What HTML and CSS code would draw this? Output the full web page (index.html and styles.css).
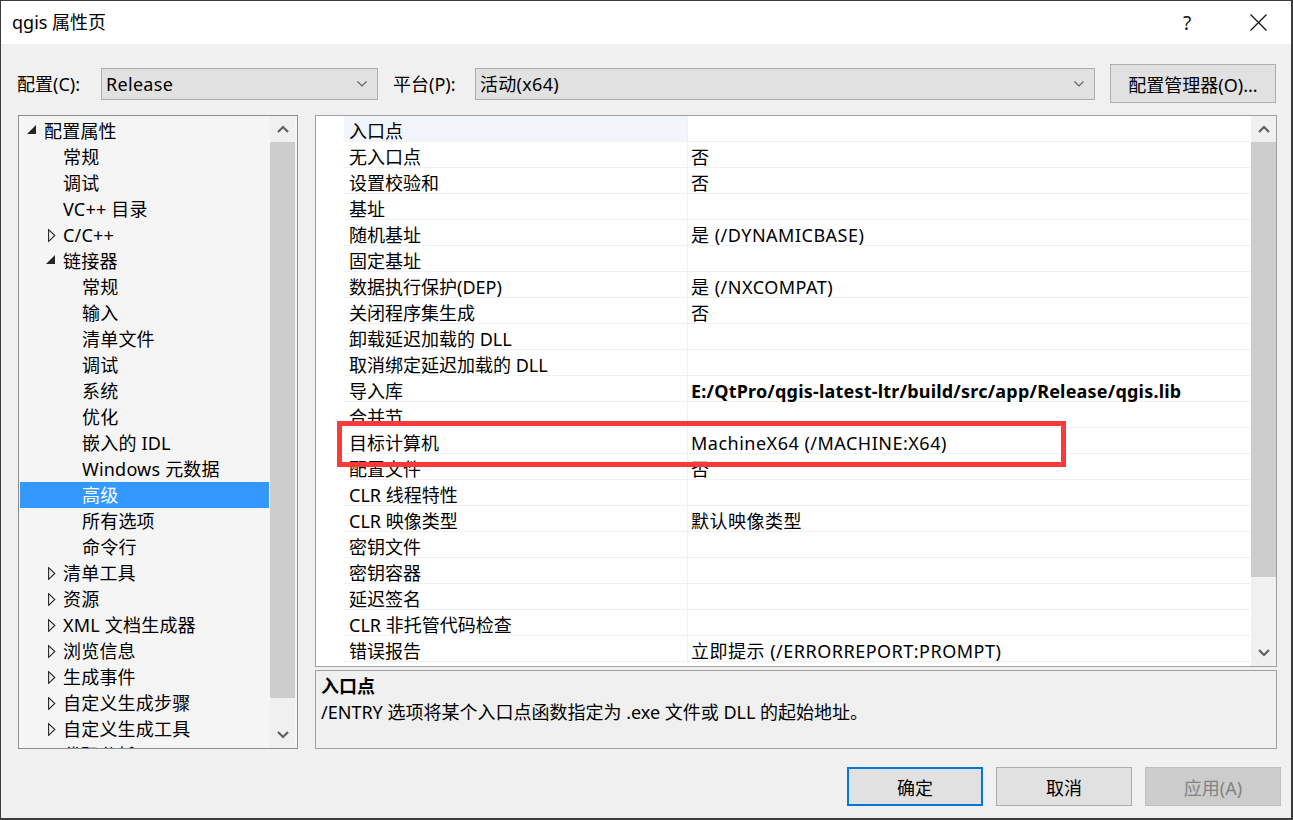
FILE: index.html
```html
<!DOCTYPE html>
<html lang="zh-CN">
<head>
<meta charset="utf-8">
<title>qgis 属性页</title>
<link rel="stylesheet" href="styles.css">
</head>
<body>
<div class="window">
  <div class="titlebar">
    <div class="title">qgis 属性页</div>
    <div class="tb-btn help">?</div>
    <div class="tb-btn close">
      <svg width="17" height="17" viewBox="0 0 17 17"><path d="M0.5 0.5 L16.5 16.5 M16.5 0.5 L0.5 16.5" stroke="#111" stroke-width="1.2" fill="none"/></svg>
    </div>
  </div>

  <div class="configbar">
    <div class="cfg-label l1">配置(C):</div>
    <div class="combo c1">
      <span class="combo-text">Release</span>
      <svg class="combo-chev" width="10" height="6" viewBox="0 0 10 6"><path d="M0.5 0.5 L5 5 L9.5 0.5" stroke="#5f5f5f" stroke-width="1.1" fill="none"/></svg>
    </div>
    <div class="cfg-label l2">平台(P):</div>
    <div class="combo c2">
      <span class="combo-text">活动(x64)</span>
      <svg class="combo-chev" width="10" height="6" viewBox="0 0 10 6"><path d="M0.5 0.5 L5 5 L9.5 0.5" stroke="#5f5f5f" stroke-width="1.1" fill="none"/></svg>
    </div>
    <div class="btn mgr">配置管理器(O)...</div>
  </div>

  <div class="main">
    <div class="tree">
      <div class="tree-list">
        <div class="trow lv0"><span class="tw"><svg class="exp" width="9" height="9" viewBox="0 0 9 9"><polygon points="9,0 9,9 0,9" fill="#262626"/></svg></span><span>配置属性</span></div>
        <div class="trow lv1"><span class="tw"></span><span>常规</span></div>
        <div class="trow lv1"><span class="tw"></span><span>调试</span></div>
        <div class="trow lv1"><span class="tw"></span><span>VC++ 目录</span></div>
        <div class="trow lv1"><span class="tw"><svg class="col" width="8" height="13" viewBox="0 0 8 13"><polygon points="0.6,0.6 6.8,6.5 0.6,12.4" fill="none" stroke="#262626" stroke-width="1.1"/></svg></span><span>C/C++</span></div>
        <div class="trow lv1"><span class="tw"><svg class="exp" width="9" height="9" viewBox="0 0 9 9"><polygon points="9,0 9,9 0,9" fill="#262626"/></svg></span><span>链接器</span></div>
        <div class="trow lv2"><span class="tw"></span><span>常规</span></div>
        <div class="trow lv2"><span class="tw"></span><span>输入</span></div>
        <div class="trow lv2"><span class="tw"></span><span>清单文件</span></div>
        <div class="trow lv2"><span class="tw"></span><span>调试</span></div>
        <div class="trow lv2"><span class="tw"></span><span>系统</span></div>
        <div class="trow lv2"><span class="tw"></span><span>优化</span></div>
        <div class="trow lv2"><span class="tw"></span><span>嵌入的 IDL</span></div>
        <div class="trow lv2"><span class="tw"></span><span>Windows 元数据</span></div>
        <div class="trow lv2 selected"><span class="tw"></span><span>高级</span></div>
        <div class="trow lv2"><span class="tw"></span><span>所有选项</span></div>
        <div class="trow lv2"><span class="tw"></span><span>命令行</span></div>
        <div class="trow lv1"><span class="tw"><svg class="col" width="8" height="13" viewBox="0 0 8 13"><polygon points="0.6,0.6 6.8,6.5 0.6,12.4" fill="none" stroke="#262626" stroke-width="1.1"/></svg></span><span>清单工具</span></div>
        <div class="trow lv1"><span class="tw"><svg class="col" width="8" height="13" viewBox="0 0 8 13"><polygon points="0.6,0.6 6.8,6.5 0.6,12.4" fill="none" stroke="#262626" stroke-width="1.1"/></svg></span><span>资源</span></div>
        <div class="trow lv1"><span class="tw"><svg class="col" width="8" height="13" viewBox="0 0 8 13"><polygon points="0.6,0.6 6.8,6.5 0.6,12.4" fill="none" stroke="#262626" stroke-width="1.1"/></svg></span><span>XML 文档生成器</span></div>
        <div class="trow lv1"><span class="tw"><svg class="col" width="8" height="13" viewBox="0 0 8 13"><polygon points="0.6,0.6 6.8,6.5 0.6,12.4" fill="none" stroke="#262626" stroke-width="1.1"/></svg></span><span>浏览信息</span></div>
        <div class="trow lv1"><span class="tw"><svg class="col" width="8" height="13" viewBox="0 0 8 13"><polygon points="0.6,0.6 6.8,6.5 0.6,12.4" fill="none" stroke="#262626" stroke-width="1.1"/></svg></span><span>生成事件</span></div>
        <div class="trow lv1"><span class="tw"><svg class="col" width="8" height="13" viewBox="0 0 8 13"><polygon points="0.6,0.6 6.8,6.5 0.6,12.4" fill="none" stroke="#262626" stroke-width="1.1"/></svg></span><span>自定义生成步骤</span></div>
        <div class="trow lv1"><span class="tw"><svg class="col" width="8" height="13" viewBox="0 0 8 13"><polygon points="0.6,0.6 6.8,6.5 0.6,12.4" fill="none" stroke="#262626" stroke-width="1.1"/></svg></span><span>自定义生成工具</span></div>
        <div class="trow lv1"><span class="tw"><svg class="col" width="8" height="13" viewBox="0 0 8 13"><polygon points="0.6,0.6 6.8,6.5 0.6,12.4" fill="none" stroke="#262626" stroke-width="1.1"/></svg></span><span>代码分析</span></div>
      </div>
      <div class="vscroll tree-scroll">
        <div class="sarrow"><svg width="12" height="8" viewBox="0 0 12 8"><path d="M1 7 L6 2 L11 7" stroke="#606060" stroke-width="2.2" fill="none"/></svg></div>
        <div class="thumb"></div>
        <div class="track"></div>
        <div class="sarrow"><svg width="12" height="8" viewBox="0 0 12 8"><path d="M1 1 L6 6 L11 1" stroke="#606060" stroke-width="2.2" fill="none"/></svg></div>
      </div>
    </div>

    <div class="rightcol">
      <div class="grid">
        <div class="grid-margin"></div>
        <div class="grid-rows">
          <div class="grow current"><div class="gname">入口点</div><div class="gval"></div></div>
          <div class="grow"><div class="gname">无入口点</div><div class="gval">否</div></div>
          <div class="grow"><div class="gname">设置校验和</div><div class="gval">否</div></div>
          <div class="grow"><div class="gname">基址</div><div class="gval"></div></div>
          <div class="grow"><div class="gname">随机基址</div><div class="gval">是 (/DYNAMICBASE)</div></div>
          <div class="grow"><div class="gname">固定基址</div><div class="gval"></div></div>
          <div class="grow"><div class="gname">数据执行保护(DEP)</div><div class="gval">是 (/NXCOMPAT)</div></div>
          <div class="grow"><div class="gname">关闭程序集生成</div><div class="gval">否</div></div>
          <div class="grow"><div class="gname">卸载延迟加载的 DLL</div><div class="gval"></div></div>
          <div class="grow"><div class="gname">取消绑定延迟加载的 DLL</div><div class="gval"></div></div>
          <div class="grow"><div class="gname">导入库</div><div class="gval bold">E:/QtPro/qgis-latest-ltr/build/src/app/Release/qgis.lib</div></div>
          <div class="grow"><div class="gname">合并节</div><div class="gval"></div></div>
          <div class="grow"><div class="gname">目标计算机</div><div class="gval">MachineX64 (/MACHINE:X64)</div></div>
          <div class="grow"><div class="gname">配置文件</div><div class="gval">否</div></div>
          <div class="grow"><div class="gname">CLR 线程特性</div><div class="gval"></div></div>
          <div class="grow"><div class="gname">CLR 映像类型</div><div class="gval">默认映像类型</div></div>
          <div class="grow"><div class="gname">密钥文件</div><div class="gval"></div></div>
          <div class="grow"><div class="gname">密钥容器</div><div class="gval"></div></div>
          <div class="grow"><div class="gname">延迟签名</div><div class="gval"></div></div>
          <div class="grow"><div class="gname">CLR 非托管代码检查</div><div class="gval"></div></div>
          <div class="grow"><div class="gname">错误报告</div><div class="gval">立即提示 (/ERRORREPORT:PROMPT)</div></div>
        </div>
        <div class="vscroll grid-scroll">
          <div class="sarrow"><svg width="12" height="8" viewBox="0 0 12 8"><path d="M1 7 L6 2 L11 7" stroke="#606060" stroke-width="2.2" fill="none"/></svg></div>
          <div class="thumb"></div>
          <div class="track"></div>
          <div class="sarrow"><svg width="12" height="8" viewBox="0 0 12 8"><path d="M1 1 L6 6 L11 1" stroke="#606060" stroke-width="2.2" fill="none"/></svg></div>
        </div>
        <div class="highlight"></div>
      </div>
      <div class="desc">
        <div class="desc-title">入口点</div>
        <div class="desc-text">/ENTRY 选项将某个入口点函数指定为 .exe 文件或 DLL 的起始地址。</div>
      </div>
    </div>
  </div>

  <div class="footer">
    <div class="btn fbtn default">确定</div>
    <div class="btn fbtn">取消</div>
    <div class="btn fbtn disabled">应用(A)</div>
  </div>
</div>
</body>
</html>
```

FILE: styles.css
```css
* { box-sizing: border-box; }

html, body {
  margin: 0;
  padding: 0;
}

body {
  width: 1293px;
  height: 820px;
  overflow: hidden;
  font-family: "Noto Sans", "Noto Sans CJK SC", sans-serif;
  font-size: 18px;
  color: #000;
  background: #2b2b2b;
}

.window {
  width: 1293px;
  height: 820px;
  border-top: 1px solid #3c3c3c;
  border-left: 1px solid #3c3c3c;
  border-right: 2px solid #3c3c3c;
  border-bottom: 2px solid #3c3c3c;
  background: #f0f0f0;
  display: flex;
  flex-direction: column;
}

/* Title bar */
.titlebar {
  height: 43px;
  flex: none;
  background: #fff;
  display: flex;
  align-items: center;
  padding-left: 11px;
  padding-right: 18px;
}

.title {
  flex: 1;
  font-size: 18px;
  line-height: 43px;
}

.tb-btn {
  width: 30px;
  height: 43px;
  display: flex;
  align-items: center;
  justify-content: center;
}

.help {
  font-size: 19px;
  margin-right: 41px;
  color: #111;
}

/* Config bar */
.configbar {
  height: 71px;
  flex: none;
  display: flex;
  align-items: flex-start;
  padding-top: 20px;
  padding-left: 16px;
}

.cfg-label {
  margin-top: 4px;
  line-height: 32px;
  flex: none;
  white-space: nowrap;
}

.l1 { width: 84px; }
.l2 { width: 82px; margin-left: 15px; }

.combo {
  margin-top: 4px;
  height: 32px;
  background: #e1e1e1;
  border: 1px solid #adadad;
  display: flex;
  align-items: center;
  padding-left: 4px;
  padding-right: 10px;
  flex: none;
}

.c1 { width: 277px; }
.c2 { width: 620px; }

.combo-text {
  flex: 1;
  line-height: 30px;
  letter-spacing: 0.3px;
}

.combo-chev { flex: none; }

.btn {
  background: #e1e1e1;
  border: 1px solid #adadad;
  display: flex;
  align-items: center;
  justify-content: center;
  white-space: nowrap;
}

.mgr {
  width: 166px;
  height: 39px;
  margin-left: 15px;
  flex: none;
}

/* Main area */
.main {
  height: 634px;
  flex: none;
  display: flex;
  padding-left: 17px;
  gap: 17px;
}

.tree {
  width: 280px;
  height: 634px;
  border: 1px solid #8f8f8f;
  background: #f5f5f5;
  display: flex;
  flex: none;
}

.tree-list {
  width: 251px;
  overflow: hidden;
  padding-top: 2px;
  flex: none;
}

.trow {
  height: 26px;
  margin: 0 1px;
  display: flex;
  align-items: center;
  white-space: nowrap;
  line-height: 26px;
  letter-spacing: 0.2px;
}

.trow.lv0 { padding-left: 7px; }
.trow.lv1 { padding-left: 26px; }
.trow.lv2 { padding-left: 45px; }

.trow.selected {
  background: #3399ff;
  color: #fff;
}

.tw {
  width: 17px;
  height: 26px;
  flex: none;
  display: flex;
  align-items: center;
}

.tw .exp { margin-top: -3px; }
.tw .col { margin-left: 2px; }

.vscroll {
  width: 25px;
  flex: none;
  display: flex;
  flex-direction: column;
  background: #f0f0f0;
}

.tree-scroll { margin-right: 2px; }

.sarrow {
  height: 26px;
  flex: none;
  display: flex;
  align-items: center;
  justify-content: center;
}

.thumb {
  background: #cdcdcd;
  flex: none;
}

.track { flex: 1; }

.tree-scroll .thumb { height: 556px; }
.grid-scroll .thumb { height: 435px; }

.rightcol {
  width: 962px;
  flex: none;
  display: flex;
  flex-direction: column;
  gap: 3px;
}

.grid {
  position: relative;
  height: 552px;
  flex: none;
  border: 1px solid #a0a0a0;
  background: #fff;
  display: flex;
}

.grid-margin {
  width: 28px;
  flex: none;
}

.grid-rows {
  width: 907px;
  flex: none;
  overflow: hidden;
}

.grow {
  height: 26px;
  display: flex;
  border-bottom: 1px solid #f0f0f7;
  white-space: nowrap;
}

.gname {
  width: 344px;
  flex: none;
  padding-left: 5px;
  padding-top: 5px;
  line-height: 20px;
  border-right: 1px solid #f0f0f7;
}

.grow.current .gname { background: #f2f5fa; }

.gval {
  flex: 1;
  padding-left: 3px;
  padding-top: 5px;
  line-height: 20px;
  letter-spacing: 0.5px;
}

.gval.bold { font-weight: bold; letter-spacing: 0.2px; }

.highlight {
  position: absolute;
  left: 21px;
  top: 305px;
  width: 729px;
  height: 46px;
  border: 5px solid #fc3a3a;
  pointer-events: none;
}

.desc {
  height: 79px;
  flex: none;
  border: 1px solid #a0a0a0;
  background: #f0f0f0;
  padding: 2px 5px 0;
  line-height: 26px;
}

.desc-title { font-weight: bold; }

/* Footer */
.footer {
  flex: 1;
  display: flex;
  justify-content: flex-end;
  align-items: flex-start;
  padding-top: 18px;
  padding-right: 10px;
  gap: 13px;
}

.fbtn {
  width: 136px;
  height: 39px;
  flex: none;
}

.fbtn.default {
  border: 2px solid #0078d7;
}

.fbtn.disabled {
  background: #cccccc;
  border-color: #bfbfbf;
  color: #838383;
}
```
